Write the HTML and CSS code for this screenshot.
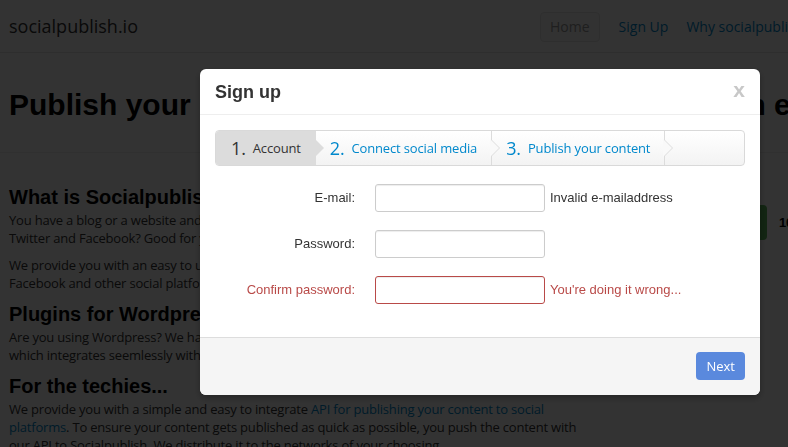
FILE: index.html
```html
<!DOCTYPE html>
<html>
<head>
<meta charset="utf-8">
<title>socialpublish.io</title>
<link rel="stylesheet" href="styles.css">
</head>
<body>
<div class="page">
  <header class="navbar">
    <a class="brand" href="#">socialpublish.io</a>
    <nav class="nav">
      <a class="nav-item active" href="#">Home</a>
      <a class="nav-item" href="#">Sign Up</a>
      <a class="nav-item" href="#">Why socialpublish.io</a>
    </nav>
  </header>
  <section class="hero">
    <h1>Publish your blog posts to all social networks in own easy way</h1>
  </section>
  <div class="content">
    <div class="main">
      <h2>What is Socialpublish?</h2>
      <p>You have a blog or a website and you would like to share your content automatically on<br>Twitter and Facebook? Good for you, because that is exactly what we are here for.</p>
      <p>We provide you with an easy to use service that publishes your posts to Twitter,<br>Facebook and other social platforms as soon as you hit the publish button.</p>
      <h2>Plugins for Wordpress</h2>
      <p>Are you using Wordpress? We have created an easy to install plugin for your blog<br>which integrates seemlessly with your Wordpress installation.</p>
      <h2>For the techies...</h2>
      <p>We provide you with a simple and easy to integrate <a href="#">API for publishing your content to social<br>platforms</a>. To ensure your content gets published as quick as possible, you push the content with<br>our API to Socialpublish. We distribute it to the networks of your choosing.</p>
    </div>
    <aside class="side">
      <a class="btn-green" href="#">Sign up now</a>
      <span class="side-count">10</span>
    </aside>
  </div>
</div>
<div class="backdrop"></div>
<div class="modal">
  <div class="modal-header">
    <h3>Sign up</h3>
    <span class="close">x</span>
  </div>
  <div class="modal-body">
    <ul class="steps">
      <li class="step current"><span class="num">1.</span>Account</li>
      <li class="step"><span class="num">2.</span>Connect social media</li>
      <li class="step"><span class="num">3.</span>Publish your content</li>
    </ul>
    <form class="form">
      <div class="group">
        <label class="label">E-mail:</label>
        <div class="controls"><input class="input" type="text"><span class="help">Invalid e-mailaddress</span></div>
      </div>
      <div class="group">
        <label class="label">Password:</label>
        <div class="controls"><input class="input" type="password"></div>
      </div>
      <div class="group error">
        <label class="label">Confirm password:</label>
        <div class="controls"><input class="input" type="password"><span class="help">You're doing it wrong...</span></div>
      </div>
    </form>
  </div>
  <div class="modal-footer">
    <a class="btn-primary" href="#">Next</a>
  </div>
</div>
</body>
</html>
```
FILE: styles.css
```css
html, body {
  margin: 0;
  padding: 0;
  background: #fff;
  overflow: hidden;
}
body {
  font-family: "Open Sans", "Noto Sans", sans-serif;
  font-size: 13px;
  letter-spacing: -0.2px;
  line-height: 18px;
  color: #333;
}
a { color: #08c; text-decoration: none; }

.page { width: 788px; height: 447px; overflow: hidden; }

.navbar {
  height: 53px;
  border-bottom: 1px solid #e5e5e5;
  display: flex;
  align-items: center;
  padding-left: 9px;
  box-sizing: border-box;
  white-space: nowrap;
  letter-spacing: 0;
}
.brand {
  font-size: 18px;
  color: #333;
  margin-top: -1px;
}
.nav {
  display: flex;
  align-items: center;
  margin-left: 402px;
  padding-top: 1px;
}
.nav-item {
  font-size: 14px;
  padding: 5px 10px;
  line-height: 18px;
}
.nav-item + .nav-item { padding-left: 9px; padding-right: 9px; }
.nav-item.active {
  color: #999;
  background: #fafafa;
  border: 1px solid #e6e6e6;
  border-radius: 4px;
  padding: 5px 9px;
  margin-right: 10px;
}

.hero {
  height: 99px;
  border-bottom: 1px solid #eee;
  padding: 0 9px;
  white-space: nowrap;
}
.hero h1 {
  margin: 0;
  padding-top: 34px;
  font-family: "Liberation Sans", Arial, sans-serif;
  font-weight: bold;
  font-size: 30px;
  line-height: 36px;
  letter-spacing: 0;
  color: #000;
}

.content {
  display: flex;
  padding: 31px 0 0 9px;
}
.main { width: 657px; flex-shrink: 0; white-space: nowrap; }
.main h2 {
  font-family: "Liberation Sans", Arial, sans-serif;
  font-size: 20px;
  font-weight: bold;
  line-height: 27px;
  letter-spacing: 0;
  margin: 0;
  color: #000;
}
.main p { margin: 0 0 9px; }

.side {
  display: flex;
  flex-shrink: 0;
  align-items: center;
  margin-top: 21px;
  align-self: flex-start;
}
.btn-green {
  display: block;
  width: 101px;
  height: 35px;
  border-radius: 4px;
  background: #5bb75b;
  color: #fff;
  font-size: 14px;
  line-height: 35px;
  text-align: center;
}
.side-count {
  margin-left: 12px;
  font-weight: bold;
  color: #000;
  font-family: "Liberation Sans", Arial, sans-serif;
}

.backdrop {
  position: fixed;
  inset: 0;
  background: rgba(0, 0, 0, 0.8);
}

.modal {
  position: fixed;
  left: 200px;
  top: 69px;
  width: 560px;
  background: #fff;
  border-radius: 6px;
  box-shadow: 0 3px 7px rgba(0, 0, 0, 0.3);
  overflow: hidden;
  font-family: "Liberation Sans", Arial, sans-serif;
  font-size: 13px;
  letter-spacing: 0;
}
.modal-header {
  height: 46px;
  box-sizing: border-box;
  border-bottom: 1px solid #eee;
  display: flex;
  align-items: center;
  justify-content: space-between;
  padding: 0 15px 0 15px;
}
.modal-header h3 {
  margin: 0;
  font-size: 18px;
  font-weight: bold;
  color: #333;
  line-height: 24px;
}
.close {
  font-size: 21px;
  font-weight: bold;
  color: #c8c8c8;
  margin-top: -3px;
}
.modal-body { padding: 15px; }

.steps {
  list-style: none;
  margin: 0 0 18px;
  padding: 0;
  height: 36px;
  box-sizing: border-box;
  border: 1px solid #d9d9d9;
  border-radius: 4px;
  background: linear-gradient(#ffffff, #f3f3f3);
  display: flex;
  font-family: "Open Sans", "Noto Sans", sans-serif;
  font-size: 13px;
  letter-spacing: -0.15px;
  color: #08c;
}
.step {
  position: relative;
  display: flex;
  align-items: center;
  padding: 0 14px;
  border-right: 1px solid #dcdcdc;
  white-space: nowrap;
}
.step::before, .step::after {
  content: "";
  position: absolute;
  top: 50%;
  margin-top: -9px;
  border-top: 9px solid transparent;
  border-bottom: 9px solid transparent;
  z-index: 1;
}
.step::before {
  left: 100%;
  border-left: 9px solid #dcdcdc;
}
.step::after {
  left: calc(100% - 1px);
  border-left: 9px solid #f9f9f9;
  z-index: 2;
}
.step.current {
  background: #dcdcdc;
  color: #333;
  padding: 0 15px;
  border-right: none;
  border-radius: 3px 0 0 3px;
}
.step.current::before { display: none; }
.step.current::after {
  left: 100%;
  border-left: 8px solid #dcdcdc;
  margin-top: -8px;
  border-top-width: 8px;
  border-bottom-width: 8px;
}
.num {
  font-size: 18px;
  margin-right: 7px;
}

.group {
  display: flex;
  margin-bottom: 18px;
}
.label {
  width: 140px;
  text-align: right;
  padding-top: 5px;
  line-height: 18px;
  color: #333;
}
.controls {
  margin-left: 20px;
  display: flex;
  align-items: center;
}
.input {
  width: 170px;
  height: 28px;
  box-sizing: border-box;
  border: 1px solid #ccc;
  border-radius: 3px;
  padding: 4px 6px;
  margin: 0;
  box-shadow: inset 0 1px 1px rgba(0, 0, 0, 0.075);
  font: inherit;
}
.help {
  padding-left: 5px;
  color: #333;
}
.error .label, .error .help { color: #b94a48; }
.error .input { border-color: #b94a48; }

.modal-footer {
  border-top: 1px solid #ddd;
  background: #f5f5f5;
  padding: 14px 15px 15px;
  display: flex;
  justify-content: flex-end;
}
.btn-primary {
  display: block;
  height: 28px;
  line-height: 28px;
  padding: 0 10px;
  border-radius: 4px;
  background: #5a89dd;
  color: #fff;
  font-family: "Open Sans", "Noto Sans", sans-serif;
  font-size: 13px;
}
```
